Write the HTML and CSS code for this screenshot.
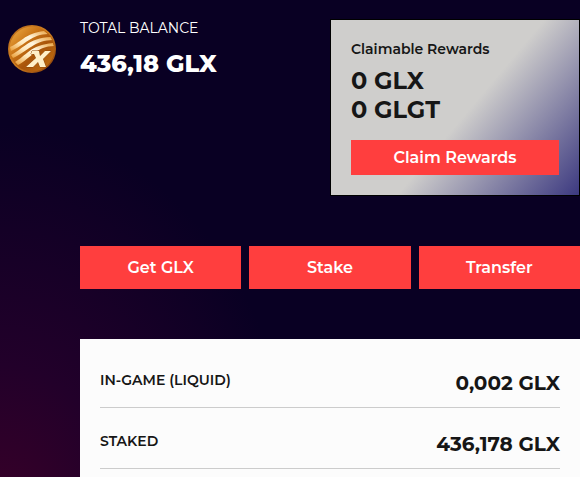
FILE: index.html
```html
<!DOCTYPE html>
<html lang="en">
<head>
    <meta charset="UTF-8">
    <meta name="viewport" content="width=device-width, initial-scale=1.0">
    <title>GLX Wallet</title>
    <link rel="stylesheet" href="styles.css">
</head>
<body>
    <main class="wallet">
        <svg class="coin" viewBox="0 0 48 48" role="img" aria-label="GLX">
            <defs>
                <linearGradient id="rim" x1="0" y1="0" x2="1" y2="1">
                    <stop offset="0" stop-color="#b5681c"/>
                    <stop offset="0.5" stop-color="#d08020"/>
                    <stop offset="1" stop-color="#803606"/>
                </linearGradient>
                <linearGradient id="face" x1="0" y1="0" x2="1" y2="1">
                    <stop offset="0" stop-color="#f2b048"/>
                    <stop offset="0.35" stop-color="#c97416"/>
                    <stop offset="0.6" stop-color="#a8540a"/>
                    <stop offset="1" stop-color="#c47312"/>
                </linearGradient>
                <linearGradient id="band" x1="0" y1="1" x2="1" y2="0">
                    <stop offset="0" stop-color="#e89a32"/>
                    <stop offset="0.35" stop-color="#ffe9bd"/>
                    <stop offset="0.6" stop-color="#fff6e0"/>
                    <stop offset="1" stop-color="#e9a342"/>
                </linearGradient>
                <clipPath id="disc"><circle cx="24" cy="24" r="22"/></clipPath>
            </defs>
            <circle cx="24" cy="24" r="24" fill="url(#rim)"/>
            <circle cx="24" cy="24" r="22.5" fill="url(#face)"/>
            <g clip-path="url(#disc)" fill="url(#band)">
                <path d="M2 22C11 19 17 8 36 6L40 9C24 9 17 20 3 26Z"/>
                <path d="M3 30C14 25 20 13 43 12L45 15C27 15 20 26 5 33Z"/>
                <path d="M7 37C18 31 22 20 45 18L46 21C29 21 23 33 10 40Z"/>
            </g>
            <path d="M24 26H31L32 31L37 26H43L35 34L38 42H32L30 37L25 42H18L28 33L26 29H23Z" fill="#ffefc8" stroke="#8f4607" stroke-width="1" paint-order="stroke"/>
        </svg>

        <div class="content">
            <header class="summary">
                <div class="balance">
                    <h2 class="balance-label">TOTAL BALANCE</h2>
                    <p class="balance-value">436,18 GLX</p>
                </div>
                <section class="rewards">
                    <h3 class="rewards-title">Claimable Rewards</h3>
                    <p class="rewards-value">0 GLX</p>
                    <p class="rewards-value">0 GLGT</p>
                    <button type="button" class="btn btn-claim">Claim Rewards</button>
                </section>
            </header>

            <div class="actions">
                <button type="button" class="btn">Get GLX</button>
                <button type="button" class="btn">Stake</button>
                <button type="button" class="btn">Transfer</button>
            </div>

            <dl class="details">
                <div class="row">
                    <dt>IN-GAME (LIQUID)</dt>
                    <dd>0,002 GLX</dd>
                </div>
                <div class="row">
                    <dt>STAKED</dt>
                    <dd>436,178 GLX</dd>
                </div>
            </dl>
        </div>
    </main>
</body>
</html>
```
FILE: styles.css
```css
* {
    box-sizing: border-box;
}
body {
    margin: 0;
    min-height: 100vh;
    background: radial-gradient(300px 400px at 0 110%, #3a0028 0, #22002a 40%, #090023 100%);
    font-family: Montserrat, Inter, sans-serif;
    color: #161616;
}
h2, h3, p, dl, dd {
    margin: 0;
}
.wallet {
    display: flex;
    gap: 24px;
    padding: 19px 0 0 8px;
}
.coin {
    flex: none;
    width: 48px;
    height: 48px;
    margin-top: 6px;
}
.content {
    flex: 1;
}
.summary {
    display: grid;
    grid-template-columns: 1fr 1fr;
}
.balance {
    color: #fff;
}
.balance-label {
    font-size: 14px;
    font-weight: 400;
    line-height: 18px;
}
.balance-value {
    margin-top: 12px;
    font-size: 24px;
    font-weight: 800;
    line-height: 29px;
}
.rewards {
    padding: 20px;
    border: 1px solid #000;
    background: linear-gradient(130deg, #cfcecc 54%, #3c3980);
}
.rewards-title {
    margin-bottom: 8px;
    font-size: 14px;
    font-weight: 600;
    line-height: 18px;
}
.rewards-value {
    font-size: 24px;
    font-weight: 700;
    line-height: 29px;
}
.btn {
    padding: 12px;
    border: none;
    background-color: #ff3e3e;
    color: #fff;
    font-family: inherit;
    font-size: 16px;
    font-weight: 600;
    line-height: 19px;
    cursor: pointer;
}
.btn:hover {
    background-color: #e02f2f;
}
.btn-claim {
    width: 100%;
    margin-top: 16px;
    padding: 8px;
}
.actions {
    display: grid;
    grid-template-columns: repeat(3, 1fr);
    gap: 8px;
    margin: 50px 0;
}
.details {
    padding: 20px 20px 8px;
    background-color: #fcfcfc;
}
.row {
    display: flex;
    justify-content: space-between;
    padding: 12px 0;
    border-bottom: 1px solid #ccc;
}
.row + .row {
    padding-top: 24px;
}
dt {
    font-size: 14px;
    font-weight: 600;
    line-height: 18px;
}
dd {
    font-size: 20px;
    font-weight: 700;
    line-height: 24px;
}
```
